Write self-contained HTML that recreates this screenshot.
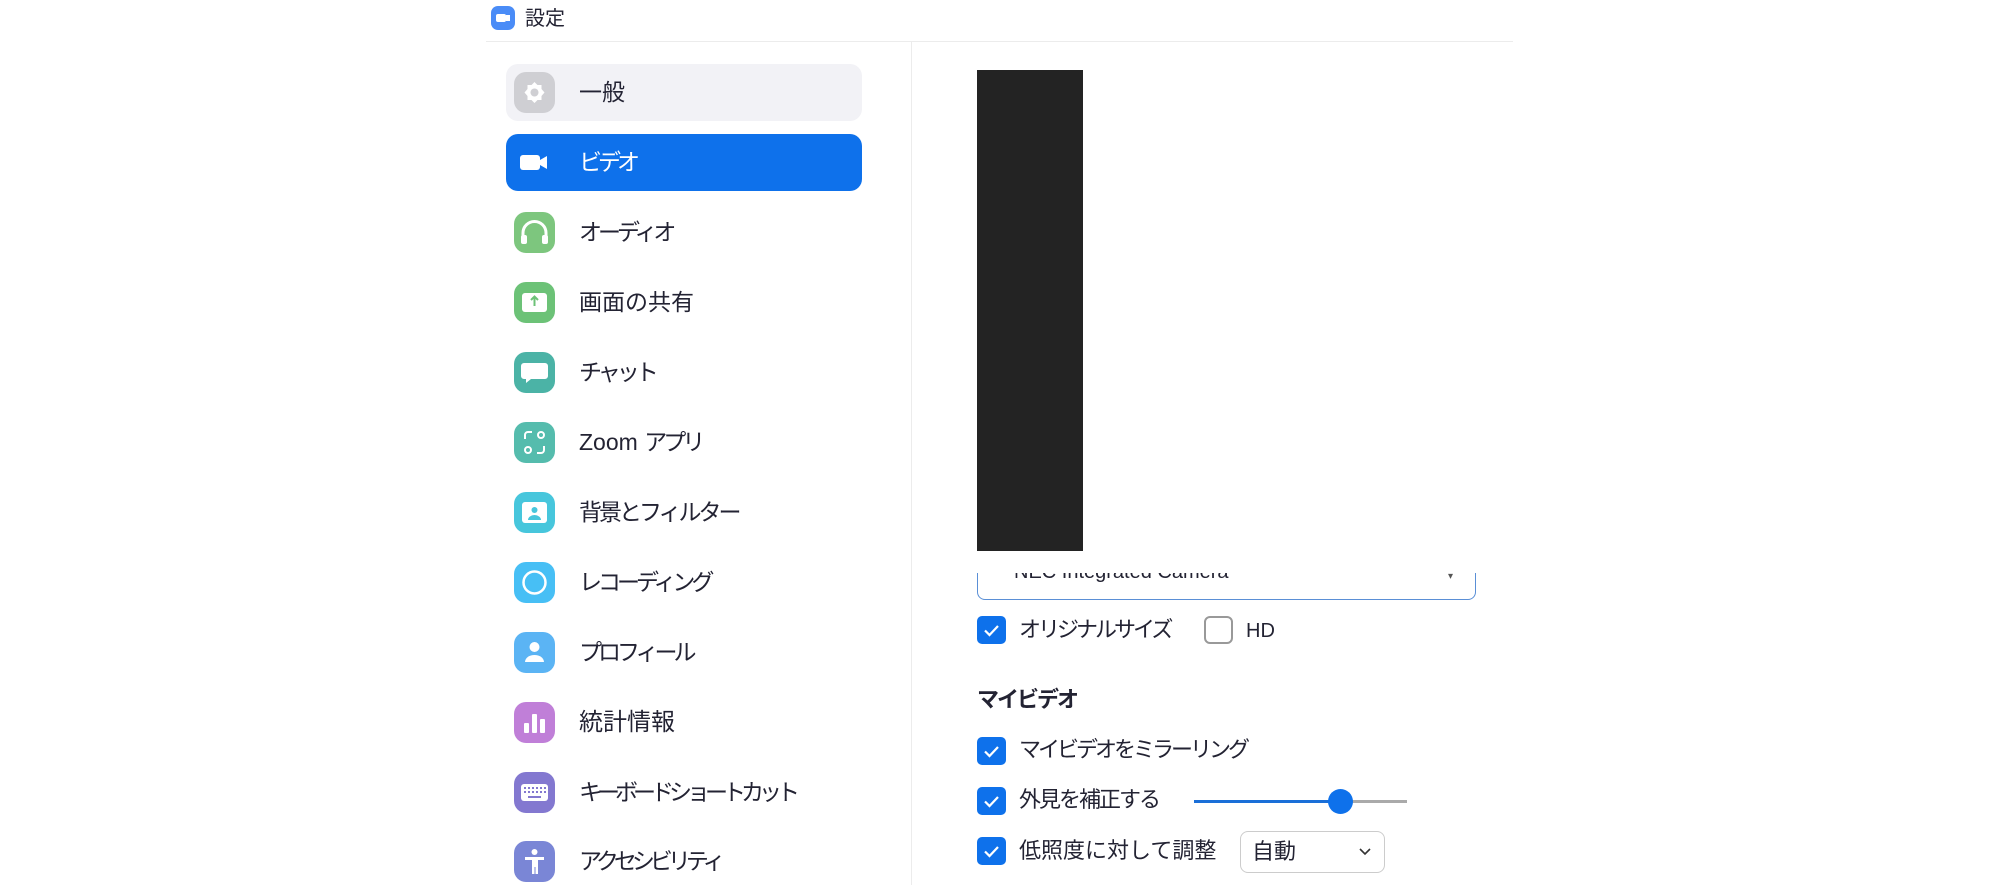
<!DOCTYPE html>
<html><head><meta charset="utf-8"><style>
*{margin:0;padding:0;box-sizing:border-box}
body{width:2000px;height:885px;background:#fff;position:relative;overflow:hidden;font-family:"Liberation Sans","Noto Sans CJK JP",sans-serif;color:#232333}
.a{position:absolute}
.item{position:absolute;left:506px;width:356px;height:57px;border-radius:12px}
.ic{position:absolute;left:8px;top:8px;width:41px;height:41px;border-radius:12px}
.ic svg{position:absolute;left:0;top:0}
.lbl{position:absolute;left:73px;top:0;line-height:57px;font-size:23px;white-space:nowrap}
.k{letter-spacing:-4px}
.cb{position:absolute;left:977px;width:29px;height:28px;border-radius:5px;background:#0e71eb}
.cb svg{position:absolute;left:0;top:0}
.t{position:absolute;font-size:22px;line-height:28px;white-space:nowrap}
.tk{letter-spacing:-3px}
</style></head><body>
<div class="a" style="left:491px;top:6px;width:24px;height:24px;border-radius:7px;background:#4a8cf7"><div class="a" style="left:5px;top:8px;width:10px;height:8px;background:#fff;border-radius:2px"></div><div class="a" style="left:15px;top:9px;width:4px;height:6px;background:#fff"></div></div>
<div class="a" style="left:525px;top:6px;font-size:20px;line-height:26px">設定</div>
<div class="a" style="left:486px;top:41px;width:1027px;height:1px;background:#ececec"></div>
<div class="a" style="left:911px;top:42px;width:1px;height:843px;background:#ececec"></div>

<div class="item" style="top:64px;background:#f2f2f6"><div class="ic" style="background:#cfcfd3"><svg width="41" height="41" viewBox="0 0 41 41"><path d="M20.5 10l3 3h4v4l3 3.5-3 3.5v4h-4l-3 3-3-3h-4v-4l-3-3.5 3-3.5v-4h4z" fill="#fff"/><circle cx="20.5" cy="20.5" r="4" fill="#cfcfd3"/></svg></div><div class="lbl">一般</div></div>
<div class="item" style="top:134px;background:#0e71eb"><div class="ic"><svg width="41" height="41"><rect x="6" y="13" width="20" height="15" rx="3" fill="#fff"/><path d="M26 18l7-4v13l-7-4z" fill="#fff"/></svg></div><div class="lbl k" style="color:#fff">ビデオ</div></div>
<div class="item" style="top:204px"><div class="ic" style="background:#7dc67e"><svg width="41" height="41"><path d="M9 28v-7a11.5 11.5 0 0 1 23 0v7" stroke="#fff" stroke-width="3" fill="none"/><rect x="7" y="23" width="6" height="9" rx="2" fill="#fff"/><rect x="28" y="23" width="6" height="9" rx="2" fill="#fff"/></svg></div><div class="lbl k">オーディオ</div></div>
<div class="item" style="top:274px"><div class="ic" style="background:#6cc277"><svg width="41" height="41"><rect x="8" y="11" width="25" height="19" rx="3" fill="#fff"/><path d="M20.5 15v9M17 18l3.5-3.5 3.5 3.5" stroke="#6cc277" stroke-width="2" fill="none"/></svg></div><div class="lbl">画面の共有</div></div>
<div class="item" style="top:344px"><div class="ic" style="background:#4bb3a6"><svg width="41" height="41"><path d="M10 11h21a3 3 0 0 1 3 3v10a3 3 0 0 1-3 3H17l-5 4v-4h-2a3 3 0 0 1-3-3V14a3 3 0 0 1 3-3z" fill="#fff"/></svg></div><div class="lbl k">チャット</div></div>
<div class="item" style="top:414px"><div class="ic" style="background:#55bcad"><svg width="41" height="41" fill="none" stroke="#fff" stroke-width="2"><path d="M18 10h-4a3 3 0 0 0-3 3v4M23 31h4a3 3 0 0 0 3-3v-4"/><circle cx="27" cy="13" r="3"/><circle cx="14" cy="28" r="3"/></svg></div><div class="lbl">Zoom <span class="k">アプリ</span></div></div>
<div class="item" style="top:484px"><div class="ic" style="background:#47c6dc"><svg width="41" height="41"><rect x="8" y="10" width="25" height="21" rx="3" fill="#fff"/><circle cx="20.5" cy="18" r="3" fill="#47c6dc"/><path d="M14 28a6.5 5 0 0 1 13 0z" fill="#47c6dc"/></svg></div><div class="lbl" style="letter-spacing:-3px">背景とフィルター</div></div>
<div class="item" style="top:554px"><div class="ic" style="background:#47bff5"><svg width="41" height="41"><circle cx="20.5" cy="20.5" r="11" stroke="#fff" stroke-width="2.5" fill="none"/></svg></div><div class="lbl k">レコーディング</div></div>
<div class="item" style="top:624px"><div class="ic" style="background:#5bb4f4"><svg width="41" height="41"><circle cx="20.5" cy="15" r="5" fill="#fff"/><path d="M11 30a9.5 7 0 0 1 19 0z" fill="#fff"/></svg></div><div class="lbl k">プロフィール</div></div>
<div class="item" style="top:694px"><div class="ic" style="background:#c07fd8"><svg width="41" height="41" fill="#fff"><rect x="10" y="21" width="5" height="10" rx="1"/><rect x="18" y="12" width="5" height="19" rx="1"/><rect x="26" y="17" width="5" height="14" rx="1"/></svg></div><div class="lbl" style="font-size:24px">統計情報</div></div>
<div class="item" style="top:764px"><div class="ic" style="background:#8378d0"><svg width="41" height="41"><rect x="7" y="12" width="27" height="17" rx="3" fill="#fff"/><g fill="#8378d0"><rect x="10" y="15" width="2" height="2"/><rect x="14" y="15" width="2" height="2"/><rect x="18" y="15" width="2" height="2"/><rect x="22" y="15" width="2" height="2"/><rect x="26" y="15" width="2" height="2"/><rect x="30" y="15" width="2" height="2"/><rect x="10" y="19" width="2" height="2"/><rect x="14" y="19" width="2" height="2"/><rect x="18" y="19" width="2" height="2"/><rect x="22" y="19" width="2" height="2"/><rect x="26" y="19" width="2" height="2"/><rect x="30" y="19" width="2" height="2"/><rect x="14" y="24" width="13" height="2"/></g></svg></div><div class="lbl" style="letter-spacing:-5px">キーボードショートカット</div></div>
<div class="item" style="top:833px"><div class="ic" style="background:#7a86d6"><svg width="41" height="41" fill="#fff"><circle cx="20.5" cy="11" r="3"/><path d="M11 16h19v3h-6v14h-2.5v-7h-1v7H18V19h-7z"/></svg></div><div class="lbl" style="letter-spacing:-5px">アクセシビリティ</div></div>

<div class="a" style="left:977px;top:70px;width:106px;height:481px;background:#232323"></div>
<div class="a" style="left:977px;top:573px;width:500px;height:27px;overflow:hidden"><div class="a" style="left:0;top:-23px;width:499px;height:50px;border:1.5px solid #5a8fd6;border-radius:8px"></div><div class="a" style="left:37px;top:-12px;font-size:20px;color:#232333;white-space:nowrap">NEC Integrated Camera</div><div class="a" style="left:471px;top:-2px;font-size:10px;color:#555">▾</div></div>

<div class="cb" style="top:616px"><svg width="29" height="28"><path d="M8 14.5l4.5 4.5L21 10" stroke="#fff" stroke-width="2.2" fill="none"/></svg></div>
<div class="t tk" style="left:1019px;top:616px">オリジナルサイズ</div>
<div class="a" style="left:1204px;top:616px;width:29px;height:28px;border:2px solid #999;border-radius:6px"></div>
<div class="t" style="left:1246px;top:617px;font-size:20px">HD</div>

<div class="t" style="left:977px;top:686px;font-weight:bold;font-size:22px;letter-spacing:-2px">マイビデオ</div>

<div class="cb" style="top:737px"><svg width="29" height="28"><path d="M8 14.5l4.5 4.5L21 10" stroke="#fff" stroke-width="2.2" fill="none"/></svg></div>
<div class="t tk" style="left:1019px;top:736px">マイビデオをミラーリング</div>
<div class="cb" style="top:787px"><svg width="29" height="28"><path d="M8 14.5l4.5 4.5L21 10" stroke="#fff" stroke-width="2.2" fill="none"/></svg></div>
<div class="t" style="left:1019px;top:786px;letter-spacing:-2px">外見を補正する</div>
<div class="a" style="left:1194px;top:800px;width:140px;height:3px;background:#1a6fd8"></div>
<div class="a" style="left:1350px;top:800px;width:57px;height:3px;background:#aaa"></div>
<div class="a" style="left:1328px;top:789px;width:25px;height:25px;border-radius:50%;background:#0e71eb"></div>
<div class="cb" style="top:837px"><svg width="29" height="28"><path d="M8 14.5l4.5 4.5L21 10" stroke="#fff" stroke-width="2.2" fill="none"/></svg></div>
<div class="t" style="left:1019px;top:837px">低照度に対して調整</div>
<div class="a" style="left:1240px;top:831px;width:145px;height:42px;border:1.5px solid #ccc;border-radius:8px"><div class="a" style="left:11px;top:6px;font-size:22px;line-height:28px">自動</div><svg class="a" style="left:117px;top:15px" width="14" height="10"><path d="M2 2l5 5 5-5" stroke="#333" stroke-width="1.6" fill="none"/></svg></div>
</body></html>
